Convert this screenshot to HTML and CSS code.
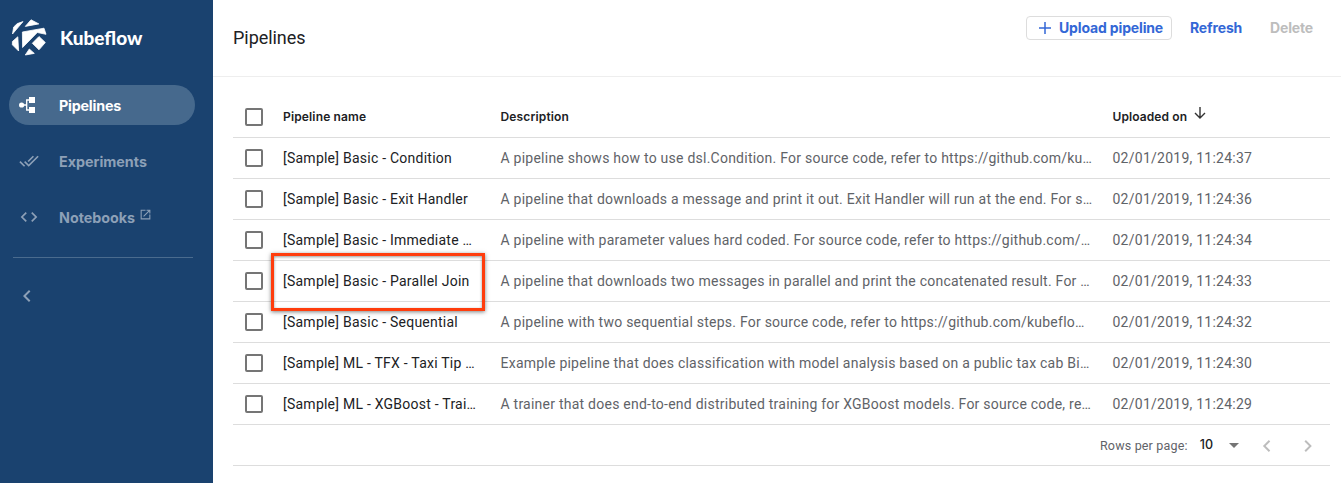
FILE: index.html
```html
<!DOCTYPE html>
<html lang="en">
<head>
<meta charset="utf-8">
<title>Kubeflow Pipelines</title>
<link rel="stylesheet" href="styles.css">
</head>
<body>
<div class="app">
  <nav class="sidebar">
    <div class="brand">
      <svg class="logo" viewBox="0 0 36 37"><g fill="#fff" stroke="#fff" stroke-width=".8" stroke-linejoin="round"><path d="M1.500 15 2.700 8 6.300 4.600 12 2.600z"/><path d="M14.300 7.400 20 .8 27.800 4.900z"/><path d="M11.400 13 33 9.200 35 15.300 26.300 13.500 11.600 28.500z"/><path d="M1.400 22.500 6.800 17.800 7.600 32 1.400 25.800z"/><path d="M28 17.500 34.300 23.500 28 30.800 21.300 24.300z"/><path d="M18.300 30 23.300 34.400 14.300 36z"/></g></svg>
      <span class="brand-name">Kubeflow</span>
    </div>
    <a class="nav-item active">
      <svg class="nav-icon" viewBox="0 0 20 20"><g fill="#fff"><circle cx="2.600" cy="10" r="2.600"/><path d="M10 2h6v6h-6zM10 12h6v6h-6z"/></g><path d="M3 10h5M11 5H7.700v10H11" fill="none" stroke="#fff" stroke-width="1.300"/></svg>
      <span class="label">Pipelines</span>
    </a>
    <a class="nav-item">
      <svg class="nav-icon" viewBox="0 0 24 24"><path fill="currentColor" d="M18 7l-1.410-1.410-6.340 6.340 1.410 1.410L18 7zm4.240-1.410L11.660 16.170 7.480 12l-1.410 1.410L11.660 19l12-12-1.420-1.410zM.41 13.410L6 19l1.410-1.410L1.830 12 .41 13.410z"/></svg>
      <span class="label">Experiments</span>
    </a>
    <a class="nav-item">
      <svg class="nav-icon" viewBox="0 0 24 24"><path fill="currentColor" d="M9.400 16.600L4.800 12l4.600-4.600L8 6l-6 6 6 6 1.400-1.400zm5.200 0l4.600-4.600-4.600-4.600L16 6l6 6-6 6-1.400-1.400z"/></svg>
      <span class="label">Notebooks</span>
      <svg class="external" viewBox="0 0 24 24"><path fill="currentColor" d="M19 19H5V5h7V3H3v18h18v-9h-2v7zM14 3v2h3.590l-9.830 9.830 1.410 1.410L19 6.410V10h2V3h-7z"/></svg>
    </a>
    <hr class="divider">
    <svg class="collapse" viewBox="0 0 24 24"><path fill="currentColor" d="M15.410 7.410L14 6l-6 6 6 6 1.410-1.410L10.830 12z"/></svg>
  </nav>
  <main class="main">
    <header class="toolbar">
      <h1 class="title">Pipelines</h1>
      <div class="actions">
        <button class="btn upload"><svg class="plus" viewBox="0 0 12 12"><path d="M6 0v12M0 6h12" stroke="#3367d6" stroke-width="1.500"/></svg><span>Upload pipeline</span></button>
        <button class="btn refresh">Refresh</button>
        <button class="btn delete">Delete</button>
      </div>
    </header>
    <section class="table">
      <div class="row head"><i class="check"></i><span class="cell h-name">Pipeline name</span><span class="cell h-desc">Description</span><span class="cell h-date">Uploaded on<svg class="sort" viewBox="0 0 12 12"><path d="M6 0v11M1 6l5 5 5-5" fill="none" stroke="#333" stroke-width="1.400"/></svg></span></div>
      <div class="row"><i class="check"></i><span class="cell name">[Sample] Basic - Condition</span><span class="cell desc">A pipeline shows how to use dsl.Condition. For source code, refer to https://github.com/ku…</span><span class="cell date">02/01/2019, 11:24:37</span></div>
      <div class="row"><i class="check"></i><span class="cell name">[Sample] Basic - Exit Handler</span><span class="cell desc">A pipeline that downloads a message and print it out. Exit Handler will run at the end. For s…</span><span class="cell date">02/01/2019, 11:24:36</span></div>
      <div class="row"><i class="check"></i><span class="cell name">[Sample] Basic - Immediate …</span><span class="cell desc">A pipeline with parameter values hard coded. For source code, refer to https://github.com/…</span><span class="cell date">02/01/2019, 11:24:34</span></div>
      <div class="row"><i class="check"></i><span class="cell name">[Sample] Basic - Parallel Join</span><span class="cell desc">A pipeline that downloads two messages in parallel and print the concatenated result. For …</span><span class="cell date">02/01/2019, 11:24:33</span><div class="highlight"></div></div>
      <div class="row"><i class="check"></i><span class="cell name">[Sample] Basic - Sequential</span><span class="cell desc">A pipeline with two sequential steps. For source code, refer to https://github.com/kubeflo…</span><span class="cell date">02/01/2019, 11:24:32</span></div>
      <div class="row"><i class="check"></i><span class="cell name">[Sample] ML - TFX - Taxi Tip …</span><span class="cell desc">Example pipeline that does classification with model analysis based on a public tax cab Bi…</span><span class="cell date">02/01/2019, 11:24:30</span></div>
      <div class="row"><i class="check"></i><span class="cell name">[Sample] ML - XGBoost - Trai…</span><span class="cell desc">A trainer that does end-to-end distributed training for XGBoost models. For source code, re…</span><span class="cell date">02/01/2019, 11:24:29</span></div>
      <footer class="pager">
        <span class="rows-label">Rows per page:</span><span class="rows-value">10</span><i class="caret"></i>
        <svg class="page prev" viewBox="0 0 24 24"><path fill="currentColor" d="M15.410 7.410L14 6l-6 6 6 6 1.410-1.410L10.830 12z"/></svg>
        <svg class="page" viewBox="0 0 24 24"><path fill="currentColor" d="M10 6L8.590 7.410 13.170 12l-4.580 4.590L10 18l6-6z"/></svg>
      </footer>
    </section>
  </main>
</div>
</body>
</html>
```
FILE: styles.css
```css
* { box-sizing: border-box; }
body { margin: 0; background: #fff; font-family: Roboto, sans-serif; color: #202124; overflow: hidden; }
.app { display: flex; height: 483px; }

.sidebar { width: 213px; flex: none; background: #1a426f; color: #8da0b7; display: flex; flex-direction: column; }
.brand { display: flex; align-items: center; height: 85px; padding: 0 0 11px 11px; gap: 13px; color: #fff; }
.logo { width: 36px; height: 37px; }
.brand-name { font: 900 19px/24px Lato, sans-serif; letter-spacing: 0; padding-top: 2px; }
.nav-item { display: flex; align-items: center; width: 186px; height: 40px; margin: 0 0 16px 9px; padding-left: 10px; border-radius: 20px; font: 700 14.3px/20px Inter, sans-serif; white-space: nowrap; }
.nav-item.active { background: #46698d; color: #fff; }
.active .label { letter-spacing: -.2px; }
.label { padding-top: 2px; }
.nav-icon { width: 20px; height: 20px; margin-right: 20px; }
.external { width: 13px; height: 13px; margin: -5px 0 0 4px; }
.divider { width: 180px; height: 1px; margin: 4px 0 26px 13px; border: 0; background: #4a6b8e; }
.collapse { width: 24px; height: 24px; margin: 0 0 0 15px; }

.main { flex: 1; min-width: 0; }
.toolbar { display: flex; justify-content: space-between; height: 77px; padding: 0 17px 0 20px; border-bottom: 1px solid #eee; }
.title { margin: 26px 0 0; font: 400 18px/24px Roboto, sans-serif; letter-spacing: -.05px; }
.actions { display: flex; margin-top: 16px; }
.btn { height: 24px; padding: 0; border: 0; background: none; color: #3367d6; font: 700 14px/22px Inter, sans-serif; letter-spacing: -.15px; text-align: left; white-space: nowrap; }
.upload { display: flex; align-items: center; width: 146px; padding-left: 12px; gap: 8px; border: 1px solid #ddd; border-radius: 4px; margin-right: 18px; }
.plus { width: 12px; height: 12px; }
.refresh { width: 80px; }
.delete { width: 54px; color: #bdbdbd; }

.table { width: 1097px; margin: 20px 0 0 20px; }
.row { position: relative; display: grid; grid-template-columns: 50px 217.500px 612px 1fr; align-items: center; height: 41px; border-bottom: 1px solid #ddd; }
.check { width: 18px; height: 18px; margin-left: 12px; border: 2px solid #757575; border-radius: 2px; }
.cell { font-size: 14px; line-height: 20px; white-space: nowrap; justify-self: start; }
.head .cell { font: 600 12px/20px Inter, sans-serif; letter-spacing: .15px; }
.head .h-date { letter-spacing: .1px; }
.name { color: #202124; letter-spacing: .24px; }
.desc, .date { color: #5f6368; letter-spacing: .24px; }
.date { letter-spacing: .25px; }
.sort { width: 12px; height: 12px; margin: 0 0 2px 7px; }
.highlight { position: absolute; left: 38px; top: -8px; width: 214px; height: 58px; border: 3px solid #ff3d0d; box-shadow: 0 1px 4px rgba(0,0,0,.5), inset 0 1px 3px rgba(0,0,0,.4); z-index: 1; }

.pager { display: flex; align-items: center; height: 41px; padding: 0 10px 0 867px; border-bottom: 1px solid #ddd; }
.rows-label { width: 101px; font-size: 12.5px; color: #5f6368; letter-spacing: .17px; white-space: nowrap; }
.rows-value { width: 28px; font: 500 12.5px/20px Inter, sans-serif; }
.caret { margin-left: 1px; border: 5px solid transparent; border-top-color: #757575; border-bottom: 0; }
.page { width: 24px; height: 24px; margin-top: 2px; color: #bdbdbd; }
.prev { margin: 2px 18px 0 16px; }
```
